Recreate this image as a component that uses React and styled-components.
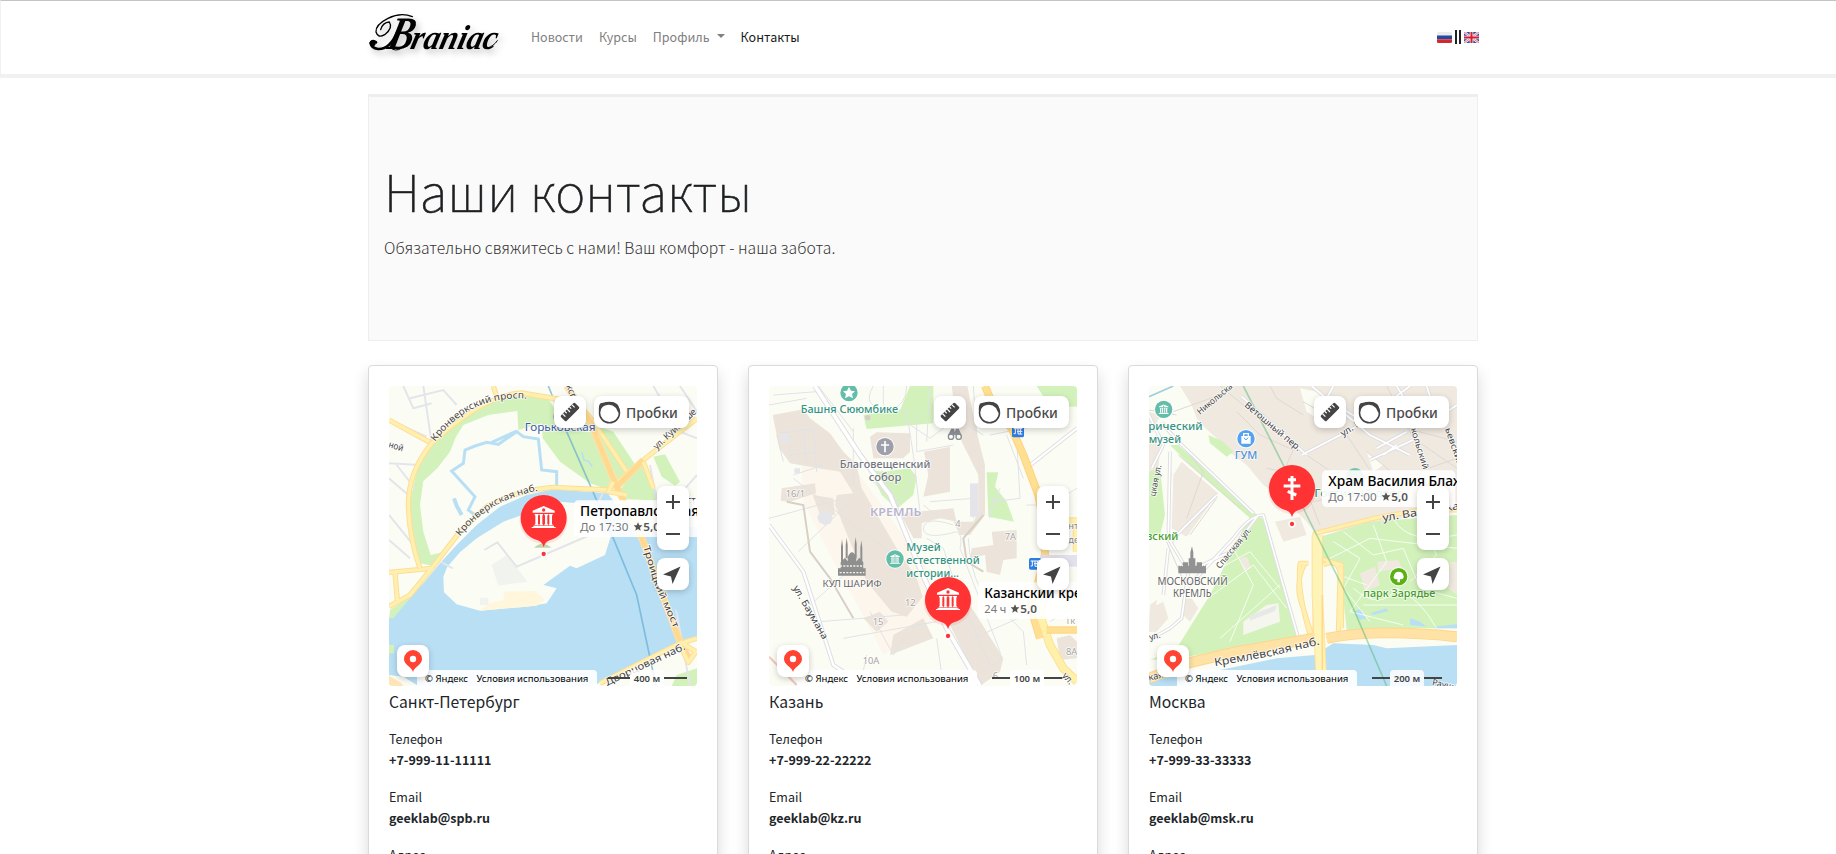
import React from "react";
import styled, { createGlobalStyle } from "styled-components";

const sans = '"Noto Sans CJK SC", "Noto Sans", sans-serif';
const mapFont = '"Noto Sans", "Open Sans", sans-serif';

const GlobalStyle = createGlobalStyle`
  * { box-sizing: border-box; }
  body {
    margin: 0;
    height: 854px;
    overflow: hidden;
    background: #fff;
    color: #212529;
    font: 400 12.5px/21px ${sans};
  }
  h1, h5, p { margin: 0; }
`;

const Page = styled.div`
  height: 854px;
  overflow: hidden;
`;

const Navbar = styled.nav`
  display: flex;
  align-items: center;
  height: 78px;
  padding: 0 357px 0 367px;
  border: 1px solid #f1f1f1;
  border-top-color: #c4c4c4;
  border-right: 0;
  border-bottom: 4px solid #f1f1f1;
`;

const Logo = styled.svg`
  width: 142px;
  height: 54px;
  margin: -6px 0 0 -4px;
  overflow: visible;
  filter: drop-shadow(3px 4px 3px rgba(0, 0, 0, 0.22));
`;

const NavLinks = styled.div`
  display: flex;
  gap: 16px;
  margin: 0 auto 3px 25px;
`;

const NavLink = styled.a`
  display: flex;
  align-items: center;
  color: ${(p) => (p.$active ? "#1a1a1a" : "#808080")};
`;

const Caret = styled.span`
  margin: -1px 0 0 7px;
  border: 4px solid transparent;
  border-top-color: #808080;
  border-bottom: 0;
`;

const Languages = styled.div`
  display: flex;
  align-items: center;
  gap: 3px;
  margin-bottom: 1px;
`;

const Bars = styled.span`
  width: 6px;
  height: 14px;
  border: solid #222;
  border-width: 0 2px;
`;

const Container = styled.main`
  width: 1110px;
  margin: 16px 0 0 368px;
`;

const Hero = styled.header`
  height: 247px;
  padding: 58px 15px 0;
  background: #fafafa;
  border: 1px solid #eee;
  border-top: 3px solid #eee;
`;

const HeroTitle = styled.h1`
  font-size: 51.3px;
  line-height: 70px;
  font-weight: 100;
  white-space: nowrap;
  color: #1d1f21;
  -webkit-text-stroke: 0.6px #1d1f21;
`;

const Lead = styled.p`
  font-size: 15.68px;
  line-height: 27px;
  margin-top: 9px;
  font-weight: 300;
  color: #333;
`;

const Cards = styled.div`
  display: grid;
  grid-template-columns: repeat(3, 350px);
  gap: 30px;
  margin-top: 24px;
`;

const Card = styled.article`
  height: 620px;
  padding: 20px;
  border: 1px solid #dadada;
  border-radius: 4px;
  background: #fff;
  box-shadow: 0 8px 16px rgba(0, 0, 0, 0.15);
`;

const City = styled.h5`
  font-size: 15.7px;
  line-height: 22px;
  font-weight: 400;
  margin: 5px 0 15px;
`;

const Field = styled.p`
  margin-bottom: 16px;
  & strong { display: block; font-weight: 700; }
`;

const MapFrame = styled.div`
  position: relative;
  width: 308px;
  height: 300px;
  border-radius: 4px;
  overflow: hidden;
  font-family: ${mapFont};
`;

const MapCanvas = styled.svg`
  display: block;
  width: 308px;
  height: 300px;
  font-family: ${mapFont};
`;

const Control = styled.div`
  position: absolute;
  left: ${(p) => p.$x}px;
  top: ${(p) => p.$y}px;
  width: ${(p) => p.$w || 32}px;
  height: ${(p) => p.$h || 32}px;
  display: flex;
  flex-direction: column;
  align-items: center;
  justify-content: center;
  border-radius: 8px;
  background: #fff;
  box-shadow: 0 2px 6px rgba(0, 0, 0, 0.2);
  & svg { display: block; }
`;

const TrafficControl = styled(Control)`
  flex-direction: row;
  justify-content: flex-start;
  gap: 5px;
  padding-left: 4px;
  font-size: 13.8px;
  font-weight: 500;
  line-height: 31px;
  color: #4a4a4a;
`;

const Copyright = styled.div`
  position: absolute;
  left: 28px;
  bottom: 0;
  width: 180px;
  height: 16px;
  padding-left: 8px;
  border-radius: 0 4px 0 0;
  display: flex;
  gap: 8.5px;
  background: rgba(255, 255, 255, 0.93);
  color: #000;
  font-size: 9.55px;
  line-height: 17px;
  white-space: nowrap;
`;

const Scale = styled.div`
  position: absolute;
  right: ${(p) => p.$inset}px;
  bottom: 0;
  height: 16px;
  display: flex;
  align-items: center;
  color: #444;
  font-size: 9.55px;
  font-weight: 600;
`;

const ScaleLine = styled.span`
  width: ${(p) => p.$w}px;
  height: 2px;
  background: #444;
`;

const ScaleValue = styled.span`
  width: 34px;
  height: 16px;
  line-height: 17px;
  text-align: center;
  border-radius: 4px 4px 0 0;
  background: rgba(255, 255, 255, 0.85);
`;

/* A map label with a light halo; len fixes its drawn width. */
const T = ({ x, y, s = 30, c = "#444", len, a = "start", r, w = 400, halo = "#fff", children }) => (
  <text
    x={x} y={y} fontSize={s} fill={c} fontWeight={w} textAnchor={a}
    stroke={halo} strokeWidth="5" strokeOpacity=".8" strokeLinejoin="round" paintOrder="stroke"
    textLength={len} lengthAdjust="spacingAndGlyphs"
    transform={r ? `rotate(${r} ${x} ${y})` : undefined}
  >{children}</text>
);

const PathLabel = ({ id, d, s = 28, len, c = "#444", children }) => (
  <>
    <path id={id} d={d} fill="none" />
    <text fontSize={s} fill={c} stroke="#fff" strokeWidth="5" strokeOpacity=".8" paintOrder="stroke">
      <textPath href={`#${id}`} textLength={len} lengthAdjust="spacingAndGlyphs">{children}</textPath>
    </text>
  </>
);

const Road = ({ d, w = 16, c = "#fff0b0", e = "#ffdd95" }) => (
  <g fill="none" strokeLinejoin="round">
    <path d={d} stroke={e} strokeWidth={w} />
    <path d={d} stroke={c} strokeWidth={w - 6} />
  </g>
);

const Streets = ({ d, w = 7, c = "#fff" }) => <Road d={d} w={w + 2} c={c} e="#dfdfe3" />;

const MuseumGlyph = ({ x, y, k = 1, c = "#fff", dot = "#ff3333" }) => (
  <g transform={`translate(${x} ${y}) scale(${k})`} fill={c}>
    <path d="M0-36 L33-22 V-16 H-33 V-22Z" />
    <circle cx="0" cy="-24" r="5" fill={dot} />
    <path d="M-27-12H-15V-8H-17V19H-15V22H-27V19H-25V-8H-27ZM-13-12H-2V-8H-4V19H-2V22H-13V19H-11V-8H-13ZM2-12H13V-8H11V19H13V22H2V19H4V-8H2ZM15-12H27V-8H25V19H27V22H15V19H17V-8H15Z" />
    <path d="M-31 23H31V27H36V30H-36V27H-31Z" />
  </g>
);

const Place = ({ x, y, title, titleLen, hours, hoursLen, boxW = 400, starX, cross }) => (
  <g>
    <rect x={x + 90} y={y - 53} width={boxW} height="110" rx="14" fill="#fff" opacity=".9" />
    <T x={x + 109} y={y - 6} s={43} c="#000" len={titleLen} w={500}>{title}</T>
    <T x={x + 109} y={y + 40} s={33} c="#777" len={hoursLen}>{hours}</T>
    <path transform={`translate(${starX} ${y + 26})`} fill="#555" d="M0-13L4-4 13-4 6 3 8 12 0 7-8 12-6 3-13-4-4-4Z" />
    <T x={starX + 16} y={y + 40} s={33} c="#555" w={600} len={50}>5,0</T>
    <ellipse cx={x} cy={y + 8} rx="72" ry="70" fill="#f33" opacity=".12" />
    <path transform={`translate(${x} ${y})`} fill="#ff3333" d="M-69 0A69 69 0 0 1 69 0C69 32 48 59 18 67Q4 72 0 88Q-4 72-18 67C-48 59-69 32-69 0Z" />
    <circle cx={x} cy={y + 108} r="11" fill="#fff" />
    <circle cx={x} cy={y + 108} r="6.5" fill="#f33" />
    {cross
      ? <path transform={`translate(${x} ${y})`} stroke="#fff" strokeWidth="9" fill="none" d="M0-36V36M-12-25H12M-25-6H25M-13 10L13 21" />
      : <MuseumGlyph x={x} y={y} />}
  </g>
);

const SpbMap = () => (
  <>
    <path fill="#b9dff5" d="M87 790L130 745 190 685 240 625 290 570 350 510 420 455 500 420 580 403 740 415 820 440 1011 470V850L960 880 800 940 700 993H87Z" />
    <path fill="#fbfdf5" d="M87 960L130 965 175 993H87ZM745 418L1011 410V515L900 520 800 490Z" />
    <path fill="#d3f2bb" d="M215 268L300 190 380 135 485 117 565 130 600 190 690 205 755 370 740 402 690 385 600 320 548 250 545 205 475 225 472 168 385 180 310 210 288 245 270 290 232 340 190 378 180 450 190 530 212 600 246 592 215 632 180 625 158 540 150 440 170 350Z" />
    <path fill="#d3f2bb" d="M690 205L760 230 840 350 780 400 725 290ZM782 402L850 326 890 410 895 437 790 432ZM880 305L915 298 960 380 945 392 905 365ZM90 765L135 735 190 680 150 730 100 790H88ZM935 993L950 960 1011 940V993ZM87 870H102V895H87Z" />
    <path fill="#ffe5b5" d="M87 962L125 985 130 993H87Z" />
    <g fill="none" stroke="#b9dff5">
      <path strokeWidth="9" d="M345 480L325 465 345 425 275 348 310 325 315 285 345 273 380 262 415 268 470 230 490 245 535 252 545 345 590 350V400M470 228L395 262" />
      <path strokeWidth="12" d="M282 430L290 452 305 480" />
      <path strokeWidth="5" d="M665 290L672 315 685 318 697 335" />
    </g>
    <path fill="#fbfdf5" d="M250 665L262 635 300 592 350 550 430 500 510 472 600 440 715 450 720 530 752 545 735 600 650 640 630 632 550 690 590 700 560 745 500 755 360 767 290 748 252 712Z" />
    <path fill="#fff6dc" d="M432 710L525 708 555 735 530 752 360 767 385 745 430 735Z" />
    <path fill="#f1f3ef" d="M395 630L440 600 503 680 415 692ZM360 728H385V750H360Z" />
    <g fill="none" stroke="#e4e5ea" strokeWidth="6">
      <path d="M245 622L278 640M373 585L412 562 470 635 690 540M130 93L160 160 215 145M150 130L250 105 290 150M190 93L215 265M87 195L200 245M87 325L180 330M110 330L165 400M87 370L145 420M87 480L160 570M87 555L150 610M870 330L990 993M730 410L700 480M960 93L1011 170M880 93L960 230 1011 250M940 440L1011 360M850 210L800 130M990 640V800" />
    </g>
    <path fill="#b9dff5" d="M760 548H1011V850L900 700Z" />
    <path d="M565 93L620 230 760 550 830 720 888 993" fill="none" stroke="#5fa9cf" strokeWidth="5" opacity=".65" />
    <Road d="M400 93L410 125M1011 190L850 315 745 405 580 397Q470 405 380 455L300 530 215 640 150 720 87 755M87 652L215 640M105 652L112 735M87 195L215 265M640 125L700 200 800 350" />
    <Road d="M610 135L485 114Q370 120 215 265 145 350 145 450 148 550 180 640" />
    <Road w={21} c="#ffd98f" e="#ffe2a5" d="M620 93L690 200 770 395 850 560 900 700 960 860 990 915M850 315L770 395" />
    <Road d="M760 380L745 410 800 420M1011 850L960 865 720 985M850 320L880 400M960 860L1008 890 985 922 960 870" />
    <PathLabel id="s1" len={318} d="M225 260Q330 120 497 131L520 133">Кронверкский просп.</PathLabel>
    <PathLabel id="s2" len={278} d="M300 545Q385 435 530 408L560 403">Кронверкская наб.</PathLabel>
    <PathLabel id="s3" len={262} d="M850 575L880 680 950 840">Троицкий мост</PathLabel>
    <T x={84} y={276} s={28} len={45} r={18}>ной</T>
    <T x={890} y={285} s={28} len={165} r={-43}>ул. Куйбыше</T>
    <T x={618} y={93} s={28} r={68}>ксп</T>
    <T x={742} y={992} s={30} len={260} r={-25}>Дворцовая наб.</T>
    <T x={980} y={445} s={28}>ст</T>
    <circle cx="607" cy="185" r="27" fill="#4868b8" opacity=".7" />
    <T x={494} y={229} s={31} c="#3f5ba9" len={213}>Горьковская</T>
    <path d="M522 578Q548 555 574 578Z" fill="#c4d5ad" />
    <Place x={551} y={489} title="Петропавловская" titleLen={358} hours="До 17:30" hoursLen={145} starX={834} />
  </>
);

const Poi = ({ x, y, c, children }) => (
  <g transform={`translate(${x} ${y})`}>
    <circle r="29" fill="#fff" opacity=".8" /><circle r="26" fill={c} />{children}
  </g>
);

const KazanMap = () => (
  <>
    <path fill="#fcf6ec" d="M185 330L240 230 310 290 560 640 590 790 430 900 380 800 270 600 190 440Z" />
    <path fill="#d3f2bb" d="M510 93H580V205L380 222 370 180 480 165ZM390 345L430 350 510 340 530 365 520 420 470 462 425 420ZM740 352H775L765 395 800 440 822 500 745 485ZM890 93H1011V155H960L920 140Z" />
    <path fill="#ece4da" d="M98 180L190 163 210 190 270 235 310 290 350 330 365 400 470 580 530 670 548 725 500 785 455 770 380 680 330 560 285 450 290 420 340 415 300 350 235 340 150 325 118 280ZM125 400L225 385 228 415 150 440 122 438ZM218 420L280 430 285 480 240 480ZM390 245L410 232 510 235V290L490 310H400ZM552 290L630 275V410L550 425 565 360ZM635 93H682L710 230 735 330V480L690 540 660 540 640 500 700 500 715 470V360L665 260 640 130ZM480 475L640 460 650 500 600 490 545 505V550L520 550ZM755 530L830 525V610L790 615 780 660 740 650 735 600 690 610 695 580 760 570ZM370 790L420 770 445 800 410 830ZM460 840L550 790 580 850 450 900ZM610 770L690 750 790 910 780 950 720 993ZM950 850L990 840 1011 860V910L960 915Z" />
    <g fill="none" stroke="#e1e2e6" strokeWidth="3">
      <path d="M100 120L230 110M87 150L200 130M400 93Q360 160 450 165 500 150 500 93M120 235L220 220 230 350M150 300L240 290M160 360L250 330M340 220V390M445 165L500 170 520 300 540 470M490 195L570 250 650 190 730 240M570 93L560 260M530 170V290L640 270M87 490L310 430M175 590L340 430M160 370L460 600M210 750L380 600M240 800L490 780M310 850L590 800M390 770L460 900 500 840M570 440L700 430V490M600 490L550 450M700 93L710 240M730 150L830 130M750 240L900 210M830 250L840 430 760 440 750 490M800 240L850 370M640 510Q550 480 550 525 560 555 650 530 670 540 660 580L780 890Q790 930 750 930L650 700 610 580 560 550M685 550Q690 640 720 700L850 830 860 930M960 430L1011 400M930 800L1011 750M830 690L910 760 880 820M700 850L990 720M590 850L610 993M380 900L360 993M930 510H1011M860 450H910M235 93L340 230M430 93V150M110 240L130 320M150 240V310M190 235L200 320M780 400L750 470M748 432H795M425 345L475 450 520 365M475 455L390 370" />
      <path d="M140 440L190 450 210 590 270 670 340 790M730 480L670 550 680 620 730 650" stroke="#d8d0c5" strokeWidth="6" />
    </g>
    <Streets w={15} d="M225 93L360 300 450 420 540 640 620 820 720 993" />
    <Streets w={11} d="M87 510L190 650 280 930 310 950M865 335L1011 220" />
    <path d="M87 905L170 990" stroke="#f3c4c0" strokeWidth="6" />
    <Road w={24} c="#ffdf91" e="#ffd480" d="M735 93L765 165 815 220 850 300 895 420 910 500 915 600 890 700 870 750 900 850" />
    <Road w={26} c="#fff0aa" e="#ffdf94" d="M910 690L900 780 930 870 970 940 1011 980M930 500H1011V590" />
    <Road w={22} c="#ffdf91" e="#ffd480" d="M920 825H1011" />
    <rect x="690" y="385" width="25" height="100" fill="#e5e4eb" />
    <rect x="900" y="600" width="111" height="35" fill="#e4e0ed" />
    <path fill="#e6e6ea" d="M232 485L240 470 257 465 273 475 279 490 272 505 255 511 237 502ZM163 340H180V355H163ZM122 238H148V262H122Z" />
    <Poi x={327} y={113} c="#63bda9"><path fill="#fff" d="M0-18L6-6 18-4 9 4 12 17 0 11-12 17-9 4-18-4-6-6Z" /></Poi>
    <T x={328} y={174} a="middle" s={30} len={292} c="#359482" w={500}>Башня Сююмбике</T>
    <circle cx="383" cy="188" r="8" fill="#d9ccc9" />
    <Poi x={435} y={275} c="#9da0ab"><path stroke="#fff" strokeWidth="5" d="M0-17V17M-12-5H12" /></Poi>
    <T x={435} y={338} a="middle" s={30} len={272} c="#72767f" w={500}>Благовещенский</T>
    <T x={435} y={377} a="middle" s={30} len={98} c="#72767f" w={500}>собор</T>
    <T x={137} y={425} s={28} c="#aaa49d">16/1</T>
    <T x={390} y={483} s={34} c="#b9b4ce" w={600} len={154}>КРЕМЛЬ</T>
    <T x={646} y={516} s={28} c="#aaa49d">4</T>
    <T x={794} y={556} s={28} c="#aaa49d">7А</T>
    <T x={495} y={752} s={28} c="#aaa49d">12</T>
    <T x={398} y={809} s={28} c="#aaa49d">15</T>
    <T x={368} y={928} s={28} c="#aaa49d">10А</T>
    <T x={978} y={899} s={28} c="#aaa49d">8А</T>
    <T x={975} y={808} s={28} c="#aaa49d">1к</T>
    <T x={758} y={973} s={28} c="#aaa49d">6</T>
    <g fill="#8f8f8f">
      <path d="M294 640H377V662H294ZM302 622L315 608 325 622V640H302ZM347 622L358 608 370 622V640H347ZM323 606Q336 578 349 606V640H323Z" />
      <path d="M303 575L306 553 309 575V625H303ZM317 570L320 548 323 570V610H317ZM344 568L347 546 350 568V610H344ZM361 578L364 556 367 578V625H361Z" />
      <path d="M300 633H373M299 653H373" stroke="#f2f1ee" strokeWidth="4" strokeDasharray="6 4" />
    </g>
    <T x={336} y={697} s={29} a="middle" len={177} c="#666">КУЛ ШАРИФ</T>
    <Poi x={465} y={612} c="#63bda9"><MuseumGlyph x={0} y={1} k={0.43} dot="#63bda9" /></Poi>
    <T x={499} y={587} s={31} c="#359482" w={500} len={103}>Музей</T>
    <T x={499} y={626} s={31} c="#359482" w={500} len={220}>естественной</T>
    <T x={499} y={665} s={31} c="#359482" w={500} len={158}>истории...</T>
    <T x={158} y={698} s={28} len={182} r={60}>ул. Баумана</T>
    <T x={965} y={962} s={28} r={50}>ул.</T>
    <T x={985} y={522} s={28} c="#888">нт</T>
    <T x={985} y={563} s={28} c="#888">де</T>
    <g fill="none" stroke="#8b8f96" strokeWidth="4"><circle cx="633" cy="245" r="8" /><circle cx="656" cy="245" r="8" /><path fill="#8b8f96" d="M628 237L635 223H641L644 240 649 223H655L661 237Z" /></g>
    {[[816, 212], [867, 609]].map(([x, y]) => (
      <g key={x} transform={`translate(${x} ${y})`}><rect width="36" height="35" rx="5" fill="#2f7ce3" /><path fill="none" stroke="#fff" strokeWidth="3" d="M5 9H31M10 9V24H5M25 9V25M15 17H31M18 9V25H31" /></g>
    ))}
    <Place x={624} y={735} title="Казанский кремль" titleLen={370} hours="24 ч" hoursLen={66} starX={825} />
  </>
);

const MoscowMap = () => (
  <>
    <path fill="#f0e9e0" d="M180 93H1011V455L800 500 590 540 560 500 500 440 430 390 380 330 300 270 230 190 215 150ZM87 170L120 180 100 230H87ZM87 250L120 270 110 420 87 430ZM150 360L180 300 290 400 270 440 200 540 150 520ZM90 750L130 720 145 790 110 840 87 830ZM200 720L235 760 210 800 180 770Z" />
    <path fill="#fbfdf5" d="M140 180L200 170 290 250 400 370 470 430 500 530 530 640 580 840 530 850 420 480 250 330ZM540 100L590 110 680 190 640 220 560 170ZM740 290L790 330 760 350Z" />
    <path fill="#d3f2bb" d="M150 270L175 270 400 470 440 500 530 850 200 905 90 915 170 880 270 720 380 500ZM265 240L310 260 340 290 320 305 270 265ZM87 350L120 340 135 480 120 540H87ZM600 545L750 500 1011 480V820L830 820 680 825 660 640 600 600ZM305 93H325V105Z" />
    <path fill="#fbfdf5" d="M160 285L390 490 300 600 190 770 150 830 87 850 140 600Z" />
    <path fill="#f0e9e0" d="M160 360L185 320 295 415 200 545 155 520ZM90 760L130 740 145 790 110 830 87 830ZM185 735L215 730 235 760 200 790Z" />
    <path fill="#f5f7ef" d="M370 800L440 750 475 745 480 800 370 840Z" />
    <path fill="#e8e9e6" d="M387 782L470 750 465 768 390 797Z" />
    <path fill="#f0e9e0" d="M465 500L540 485 560 540 490 560ZM772 620L835 615 845 640 775 650ZM720 655L765 635 780 690 735 710ZM990 620H1011V720L985 700ZM360 610L380 605 395 640 370 645Z" />
    <path fill="#b9dff5" d="M87 975L300 945 470 910 585 900 640 865 760 870 800 880 1011 870V993H87ZM700 770L720 762 740 790 720 795ZM870 790L900 800 920 815 870 810ZM940 815L1011 808V820H945ZM750 775L800 760 805 768 760 780Z" />
    <g fill="none" stroke="#fff" strokeWidth="3" opacity=".8">
      <path d="M670 530L760 600 850 580 900 700 1011 730M640 560L720 610 670 700 750 800M610 620L750 550 1011 580M760 510L800 620 690 770 850 810M700 700Q780 770 830 700 900 730 950 820M900 500L950 600 870 680M820 490Q860 570 1011 540M300 640L390 590 480 700M250 740L400 630 500 760M300 850L480 690M340 580L400 690 330 860M630 650L740 690M730 750L1011 750" />
    </g>
    <g fill="none" stroke="#ddd8d6" strokeWidth="3">
      <path d="M87 165L170 180M300 93L480 240M160 170L300 120M350 170L420 240 520 285 490 350 440 340M450 93L470 130 550 180M550 140L650 200 740 180M560 300L750 430M540 360L600 510M680 240L780 390 1011 310M740 290L900 420M580 440L790 400M800 93L880 250 1011 340M860 220L1011 260M130 200L250 350 200 490M175 300L360 460M210 540L290 430M140 560L200 700" />
    </g>
    <Streets w={9} d="M365 125L560 300M545 300L700 220 780 160 870 93M575 93L750 240 870 300M750 315L890 250M770 280L860 230M790 300L830 270M920 93L950 190 1011 150M640 93L620 130 730 200M830 93L900 210M87 180L130 270 95 340M130 210L175 260 400 475M150 290L145 550 205 650 185 790 150 820 87 855M145 580L130 720M155 560L180 530 290 420M205 650L330 590 400 500 415 480M535 850L430 480Q390 480 340 550L200 700M600 620V710" />
    <path d="M87 125L160 93" stroke="#a0cfe0" strokeWidth="5" />
    <Road d="M1011 465H900L760 490 585 535V850M555 625Q520 690 550 760L575 840M610 630Q650 610 660 650L655 830M565 625H540Q530 700 570 840M600 610L665 630V820" w={15} />
    <Road w={33} c="#fee2a6" e="#ffd58a" d="M87 970L200 925 350 890 580 850M620 850Q760 820 1011 845" />
    <Road w={34} c="#fff4b8" e="#ffe19b" d="M592 540V720L605 993" />
    <path d="M607 720V993" stroke="#ffd989" strokeWidth="5" />
    <path d="M370 93L490 330 560 480 700 760 800 993" fill="none" stroke="#4db370" strokeWidth="5" opacity=".45" />
    <T x={240} y={180} s={26} len={130} r={-40}>Никольска</T>
    <T x={372} y={153} s={27} len={212} r={40}>Ветошный пер.</T>
    <Poi x={131} y={163} c="#63bda9"><MuseumGlyph x={0} y={1} k={0.43} dot="#63bda9" /></Poi>
    <T x={248} y={226} a="end" s={30} len={200} c="#359482" w={500}>торический</T>
    <T x={86} y={265} s={30} len={97} c="#359482" w={500}>музей</T>
    <Poi x={378} y={251} c="#55a3ef"><path fill="#fff" d="M-14-8H14V15H-14Z" /><path fill="none" stroke="#fff" strokeWidth="4" d="M-7-8V-15H7V-8" /><path d="M-6-3Q0 9 6-3" fill="none" stroke="#55a3ef" strokeWidth="3" /></Poi>
    <T x={378} y={312} a="middle" s={32} len={68} c="#4d91d8" w={500}>ГУМ</T>
    <T x={105} y={425} s={26} len={95} r={-78}>цкая ул.</T>
    <T x={300} y={643} s={26} len={150} r={-51}>Спасская ул.</T>
    <T x={78} y={555} s={30} len={97} c="#479d2d" w={500}>вский</T>
    <g fill="#929292"><path d="M175 632H258V655H175ZM188 622H204V648H188ZM230 622H246V648H230ZM206 610H226V650H206ZM211 592L216 574 220 592V615H211Z" /><path d="M180 632H190M246 632H257" stroke="#fff" strokeWidth="3" strokeDasharray="3 3" /></g>
    <T x={218} y={690} a="middle" s={30} len={211} c="#666">МОСКОВСКИЙ</T>
    <T x={217} y={725} a="middle" s={30} len={116} c="#666">КРЕМЛЬ</T>
    <T x={668} y={245} s={27} len={90} r={-32}>ул. Ил</T>
    <T x={872} y={222} s={26} len={128} r={73}>кольский</T>
    <T x={975} y={222} s={26} len={120} r={71}>ьевский</T>
    <T x={789} y={499} s={31} len={232} r={-9}>ул. Варварка</T>
    <circle cx="705" cy="366" r="27" fill="#63bda9" opacity=".9" />
    <T x={583} y={426} s={31} c="#359482" w={500} len={270}>Гостиный двор</T>
    <Poi x={836} y={665} c="#5bb113"><path fill="#fff" d="M-4 17V8H-9Q-18 5-14-3-12-15 0-15 12-15 14-4 18 5 8 8H4V17Z" /></Poi>
    <T x={838} y={725} a="middle" s={30} len={216} c="#479d2d" w={500}>парк Зарядье</T>
    <PathLabel id="m1" s={33} len={322} d="M285 934L460 902 610 866 650 856">Кремлёвская наб.</PathLabel>
    <T x={87} y={977} s={28} r={-12}>кая</T>
    <T x={90} y={856} s={26} r={-14}>ул.</T>
    <T x={935} y={990} s={26} r={12}>Раушс</T>
    <Place x={516} y={399} title="Храм Василия Блаженного" titleLen={548} hours="До 17:00" hoursLen={145} starX={798} cross />
  </>
);

const RulerIcon = () => (
  <svg width="20" height="20" viewBox="-10 -10 20 20">
    <g transform="rotate(-45)"><rect x="-10" y="-4" width="20" height="8" rx="1.5" fill="#444" /><path d="M-6.5-4V0M-3.2-4V-1.5M0-4V0M3.2-4V-1.5M6.5-4V0" stroke="#fff" strokeWidth="1.2" /></g>
  </svg>
);

const TrafficIcon = () => (
  <svg width="23" height="23" viewBox="0 0 23 23">
    <circle cx="11.5" cy="11.8" r="10" fill="none" stroke="#444" strokeWidth="1.5" />
    <path d="M1 11Q0 2 4 2 14-1 19 3 22 6 22 14 19 10 18 7 14 3 9 4 3 5 1 11Z" fill="#444" />
  </svg>
);

const ContactMap = ({ Drawing, scale, left, right, inset }) => (
  <MapFrame>
    <MapCanvas viewBox="87 93 924 900" preserveAspectRatio="none">
      <rect x="87" y="93" width="924" height="900" fill="#fbfdf5" />
      <Drawing />
    </MapCanvas>
    <Control $x={165} $y={10}><RulerIcon /></Control>
    <TrafficControl $x={205} $y={10} $w={95}><TrafficIcon />Пробки</TrafficControl>
    <Control $x={268} $y={100} $h={64}>
      <svg width="32" height="64" stroke="#444" strokeWidth="2"><path d="M9 16H23M16 9V23M9 48H23" /></svg>
    </Control>
    <Control $x={268} $y={172}>
      <svg width="32" height="32" fill="#444"><path d="M23.5 8.5L6 16.6 14 18.5 15.5 26Z" /></svg>
    </Control>
    <Copyright><span>© Яндекс</span><span>Условия использования</span></Copyright>
    <Control $x={8} $y={259}>
      <svg width="32" height="32"><path d="M16 5A9 9 0 0 1 25 14C25 20 17.5 21.5 16 27 14.5 21.5 7 20 7 14A9 9 0 0 1 16 5Z" fill="#ff4433" /><circle cx="16" cy="14" r="3.2" fill="#fff" /></svg>
    </Control>
    <Scale $inset={inset}><ScaleLine $w={left} /><ScaleValue>{scale}</ScaleValue><ScaleLine $w={right} /></Scale>
  </MapFrame>
);

const contacts = [
  { city: "Санкт-Петербург", phone: "+7-999-11-11111", email: "geeklab@spb.ru", Drawing: SpbMap, scale: "400 м", left: 22, right: 23, inset: 10 },
  { city: "Казань", phone: "+7-999-22-22222", email: "geeklab@kz.ru", Drawing: KazanMap, scale: "100 м", left: 18, right: 18, inset: 15 },
  { city: "Москва", phone: "+7-999-33-33333", email: "geeklab@msk.ru", Drawing: MoscowMap, scale: "200 м", left: 18, right: 18, inset: 15 },
];

const BraniacLogo = () => (
  <Logo viewBox="0 0 426 162">
    <g fontFamily='"Liberation Serif", serif' fontWeight="700" fontStyle="italic" fill="#000">
      <text x="66" y="124" fontSize="140" textLength="76" lengthAdjust="spacingAndGlyphs" transform="translate(66 124) skewX(-14) translate(-66 -124)">B</text>
      <text x="136" y="124" fontSize="104" textLength="258" lengthAdjust="spacingAndGlyphs" transform="translate(136 124) skewX(-14) translate(-136 -124)">raniac</text>
    </g>
    <g fill="none" stroke="#000" strokeLinecap="round">
      <path strokeWidth="4" d="M145 26Q110 12 72 31 34 50 36 72 42 92 62 80 88 60 76 42 56 43 50 65" />
      <path strokeWidth="8" d="M100 72Q77 125 42 123 22 120 20 105 26 94 36 103" />
      <path strokeWidth="3" d="M86 124Q105 132 122 112M370 120Q389 115 400 98" />
    </g>
    <circle cx="26" cy="106" r="9" />
  </Logo>
);

const RussianFlag = () => (
  <svg width="15" height="11" viewBox="0 0 15 11"><rect width="15" height="11" rx="1.5" fill="#ececec" /><path fill="#2548a0" d="M0 3.5H15V7H0Z" /><path fill="#d22630" d="M0 7.3H15V9.5Q15 11 13.5 11H1.5Q0 11 0 9.5Z" /></svg>
);

const BritishFlag = () => (
  <svg width="15" height="11" viewBox="0 0 15 11"><rect width="15" height="11" rx="1.5" fill="#2e4c9e" /><path d="M0 0L15 11M15 0L0 11" stroke="#f1e4ea" strokeWidth="2.6" /><path d="M0 0L15 11M15 0L0 11" stroke="#e07783" strokeWidth=".9" /><path d="M7.5 0V11M0 5.5H15" stroke="#f1e9ee" strokeWidth="3.6" /><path d="M7.5 0V11M0 5.5H15" stroke="#d5202f" strokeWidth="2" /></svg>
);

export default function App() {
  return (
    <Page>
      <GlobalStyle />
      <Navbar>
        <BraniacLogo />
        <NavLinks>
          <NavLink>Новости</NavLink>
          <NavLink>Курсы</NavLink>
          <NavLink>Профиль<Caret /></NavLink>
          <NavLink $active>Контакты</NavLink>
        </NavLinks>
        <Languages><RussianFlag /><Bars /><BritishFlag /></Languages>
      </Navbar>
      <Container>
        <Hero>
          <HeroTitle>Наши контакты</HeroTitle>
          <Lead>Обязательно свяжитесь с нами! Ваш комфорт - наша забота.</Lead>
        </Hero>
        <Cards>
          {contacts.map(({ city, phone, email, ...map }) => (
            <Card key={city}>
              <ContactMap {...map} />
              <City>{city}</City>
              <Field>Телефон<strong>{phone}</strong></Field>
              <Field>Email<strong>{email}</strong></Field>
              <Field>Адрес</Field>
            </Card>
          ))}
        </Cards>
      </Container>
    </Page>
  );
}
